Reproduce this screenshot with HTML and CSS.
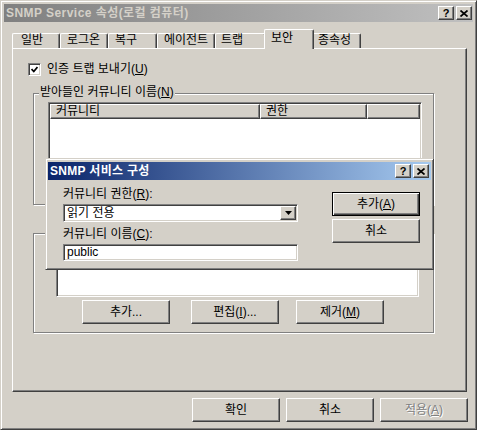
FILE: index.html
```html
<!DOCTYPE html>
<html lang="ko">
<head>
  <meta charset="UTF-8" />
  <title>SNMP Service 속성(로컬 컴퓨터)</title>
  <link rel="stylesheet" href="styles.css">
</head>
<body>
  <div class="window">
    <div class="titlebar inactive">
      <span class="title">SNMP Service 속성(로컬 컴퓨터)</span>
      <span class="caption-btn help">?</span>
      <span class="caption-btn close">
        <svg width="8" height="7" viewBox="0 0 8 7"><path d="M0.5 0.5 L7.5 6.5 M7.5 0.5 L0.5 6.5" stroke="#000" stroke-width="1.7" fill="none"/></svg>
      </span>
    </div>

    <div class="tabs">
      <div class="tab tab-general">일반</div>
      <div class="tab tab-logon">로그온</div>
      <div class="tab tab-recovery">복구</div>
      <div class="tab tab-agent">에이전트</div>
      <div class="tab tab-trap">트랩</div>
      <div class="tab tab-security selected">보안</div>
      <div class="tab tab-deps">종속성</div>
    </div>

    <div class="panel">
      <div class="check-row">
        <span class="checkbox">
          <svg width="7" height="7" viewBox="0 0 7 7"><path d="M0.5 3 L2.8 5.5 L6.5 1" stroke="#000" stroke-width="1.8" fill="none"/></svg>
        </span>
        <span>인증 트랩 보내기(<u>U</u>)</span>
      </div>

      <div class="group group-names">
        <div class="group-title">받아들인 커뮤니티 이름(<u>N</u>)</div>
        <div class="listview list-names">
          <div class="lv-head">
            <div class="col col-name">커뮤니티</div>
            <div class="col col-rights">권한</div>
            <div class="col col-rest"></div>
          </div>
        </div>
      </div>

      <div class="group group-hosts">
        <div class="listview list-hosts"></div>
        <div class="btn-row">
          <button class="btn btn-add">추가...</button>
          <button class="btn btn-edit">편집(<u>I</u>)...</button>
          <button class="btn">제거(<u>M</u>)</button>
        </div>
      </div>
    </div>

    <div class="footer">
      <button class="btn">확인</button>
      <button class="btn">취소</button>
      <button class="btn" disabled>적용(<u>A</u>)</button>
    </div>

    <div class="dialog">
      <div class="titlebar active">
        <span class="title">SNMP 서비스 구성</span>
        <span class="caption-btn help">?</span>
        <span class="caption-btn close">
          <svg width="8" height="7" viewBox="0 0 8 7"><path d="M0.5 0.5 L7.5 6.5 M7.5 0.5 L0.5 6.5" stroke="#000" stroke-width="1.7" fill="none"/></svg>
        </span>
      </div>
      <div class="dialog-body">
        <div class="fields">
          <div class="label">커뮤니티 권한(<u>R</u>):</div>
          <div class="combo">
            <span class="combo-text">읽기 전용</span>
            <span class="combo-btn">
              <svg width="7" height="4" viewBox="0 0 7 4"><path d="M0 0 H7 L3.5 4 Z" fill="#000"/></svg>
            </span>
          </div>
          <div class="label label-name">커뮤니티 이름(<u>C</u>):</div>
          <div class="textbox">public</div>
        </div>
        <div class="dialog-btns">
          <button class="btn default">추가(<u>A</u>)</button>
          <button class="btn">취소</button>
        </div>
      </div>
    </div>
  </div>
</body>
</html>
```

FILE: styles.css
```css
* {
  box-sizing: border-box;
}

html, body {
  margin: 0;
  padding: 0;
}

body {
  width: 477px;
  height: 430px;
  overflow: hidden;
  background: #d4d0c8;
  font-family: "Liberation Sans", "Noto Sans CJK KR", sans-serif;
  font-size: 12px;
  line-height: 14px;
  color: #000;
}

u {
  text-decoration: underline;
  text-underline-offset: 1px;
}

/* window frame */
.window {
  position: relative;
  width: 477px;
  height: 430px;
  border: 1px solid;
  border-color: #d4d0c8 #404040 #404040 #d4d0c8;
  box-shadow: inset 1px 1px #fff, inset -1px -1px #808080;
  padding: 3px;
}

.titlebar {
  display: flex;
  align-items: center;
  height: 18px;
  padding: 0 1px 0 2px;
}

.titlebar.inactive {
  background: linear-gradient(to right, #808080, #c0c0c0);
  color: #d4d0c8;
}

.titlebar.active {
  background: linear-gradient(to right, #0a246a, #a6caf0);
  color: #fff;
}

.title {
  font-weight: bold;
  letter-spacing: 0.45px;
  white-space: nowrap;
}

.caption-btn {
  display: flex;
  align-items: center;
  justify-content: center;
  width: 16px;
  height: 14px;
  background: #d4d0c8;
  border: 1px solid;
  border-color: #fff #404040 #404040 #fff;
  box-shadow: inset -1px -1px #808080;
  color: #000;
  font-family: "Liberation Sans", sans-serif;
  font-weight: bold;
  font-size: 11px;
  line-height: 12px;
  letter-spacing: 0;
}

.caption-btn.help {
  margin-left: auto;
}

.caption-btn.close {
  margin-left: 2px;
}

/* tabs */
.tabs {
  display: flex;
  align-items: flex-end;
  height: 19px;
  margin-top: 7px;
  padding-left: 8px;
}

.tab {
  height: 15px;
  padding-left: 6px;
  line-height: 13px;
  border-left: 1px solid #fff;
  border-top: 1px solid #fff;
  border-right: 1px solid #404040;
  border-radius: 2px 2px 0 0;
  box-shadow: inset -1px 0 #808080;
  white-space: nowrap;
}

.tab-general { width: 48px; padding-left: 8px; }
.tab-logon { width: 48px; }
.tab-recovery { width: 49px; }
.tab-agent { width: 58px; }
.tab-trap { width: 51px; padding-left: 5px; }
.tab-deps { width: 49px; padding-left: 5px; }

.tab.selected {
  position: relative;
  z-index: 1;
  width: 50px;
  height: 20px;
  margin: 0 -2px -1px;
  padding-top: 2px;
  background: #d4d0c8;
}

/* property page */
.panel {
  width: 455px;
  height: 344px;
  margin-left: 8px;
  padding: 13px 0 0 20px;
  border: 1px solid;
  border-color: #fff #404040 #404040 #fff;
  box-shadow: inset -1px -1px #808080;
}

.check-row {
  display: flex;
  align-items: center;
  gap: 6px;
  height: 14px;
  margin-left: -5px;
}

.checkbox {
  display: flex;
  align-items: center;
  justify-content: center;
  width: 13px;
  height: 13px;
  background: #fff;
  border: 1px solid;
  border-color: #808080 #fff #fff #808080;
  box-shadow: inset 1px 1px #404040, inset -1px -1px #d4d0c8;
}

.group {
  width: 401px;
  border: 1px solid #808080;
  box-shadow: 1px 1px 0 #fff, inset 1px 1px 0 #fff;
}

.group-names {
  height: 112px;
  margin-top: 17px;
}

.group-hosts {
  height: 100px;
  margin-top: 28px;
}

.group-title {
  display: table;
  margin: -9px 0 0 5px;
  padding: 0 1px;
  background: #d4d0c8;
  white-space: nowrap;
}

.listview {
  background: #fff;
  padding: 1px;
  border: 1px solid;
  border-color: #808080 #fff #fff #808080;
  box-shadow: inset 1px 1px #404040, inset -1px -1px #d4d0c8;
}

.list-names {
  width: 374px;
  height: 94px;
  margin: 3px 0 0 14px;
}

.list-hosts {
  width: 363px;
  height: 45px;
  margin: 18px 0 0 22px;
}

.lv-head {
  display: flex;
  height: 15px;
}

.col {
  height: 15px;
  padding-left: 5px;
  line-height: 13px;
  background: #d4d0c8;
  border: 1px solid;
  border-color: #fff #404040 #404040 #fff;
  box-shadow: inset -1px -1px #808080;
}

.col-name { width: 210px; }
.col-rights { width: 107px; }
.col-rest { flex: 1; }

/* buttons */
.btn {
  display: flex;
  align-items: center;
  justify-content: center;
  width: 88px;
  height: 24px;
  margin: 0;
  padding: 0;
  font: inherit;
  color: #000;
  background: #d4d0c8;
  border: 1px solid;
  border-color: #fff #404040 #404040 #fff;
  box-shadow: inset -1px -1px #808080;
}

.btn:disabled {
  color: #808080;
  text-shadow: 1px 1px 0 #fff;
}

.btn.default {
  border-color: #000;
  box-shadow: inset 1px 1px #fff, inset -1px -1px #404040, inset -2px -2px #808080;
}

.btn-row {
  display: flex;
  margin: 3px 0 0 48px;
}

.btn-add { margin-right: 21px; }
.btn-edit { margin-right: 17px; }

.footer {
  display: flex;
  justify-content: flex-end;
  gap: 6px;
  margin-top: 6px;
  padding-right: 5px;
}

/* floating dialog */
.dialog {
  position: absolute;
  left: 44px;
  top: 157px;
  z-index: 2;
  width: 389px;
  height: 112px;
  padding: 3px 2px 2px 2px;
  background: #d4d0c8;
  border: 1px solid;
  border-color: #d4d0c8 #404040 #404040 #d4d0c8;
  box-shadow: inset 1px 1px #fff, inset -1px -1px #808080;
}

.dialog .titlebar {
  padding-right: 2px;
}

.dialog .title {
  letter-spacing: 0.3px;
}

.dialog-body {
  display: flex;
  padding-left: 15px;
}

.fields {
  width: 235px;
  padding-top: 7px;
}

.label-name {
  margin-top: 5px;
}

.combo {
  display: flex;
  align-items: center;
  height: 18px;
  margin-top: 3px;
  padding: 1px 1px 1px 3px;
  background: #fff;
  border: 1px solid;
  border-color: #808080 #fff #fff #808080;
  box-shadow: inset 1px 1px #404040, inset -1px -1px #d4d0c8;
}

.combo-text {
  flex: 1;
}

.combo-btn {
  display: flex;
  align-items: center;
  justify-content: center;
  width: 16px;
  height: 14px;
  background: #d4d0c8;
  border: 1px solid;
  border-color: #fff #404040 #404040 #fff;
  box-shadow: inset -1px -1px #808080;
}

.textbox {
  height: 17px;
  margin-top: 3px;
  padding: 1px 3px;
  line-height: 13px;
  background: #fff;
  border: 1px solid;
  border-color: #808080 #fff #fff #808080;
  box-shadow: inset 1px 1px #404040, inset -1px -1px #d4d0c8;
}

.dialog-btns {
  display: flex;
  flex-direction: column;
  gap: 3px;
  margin-left: 34px;
  padding-top: 12px;
}
```
